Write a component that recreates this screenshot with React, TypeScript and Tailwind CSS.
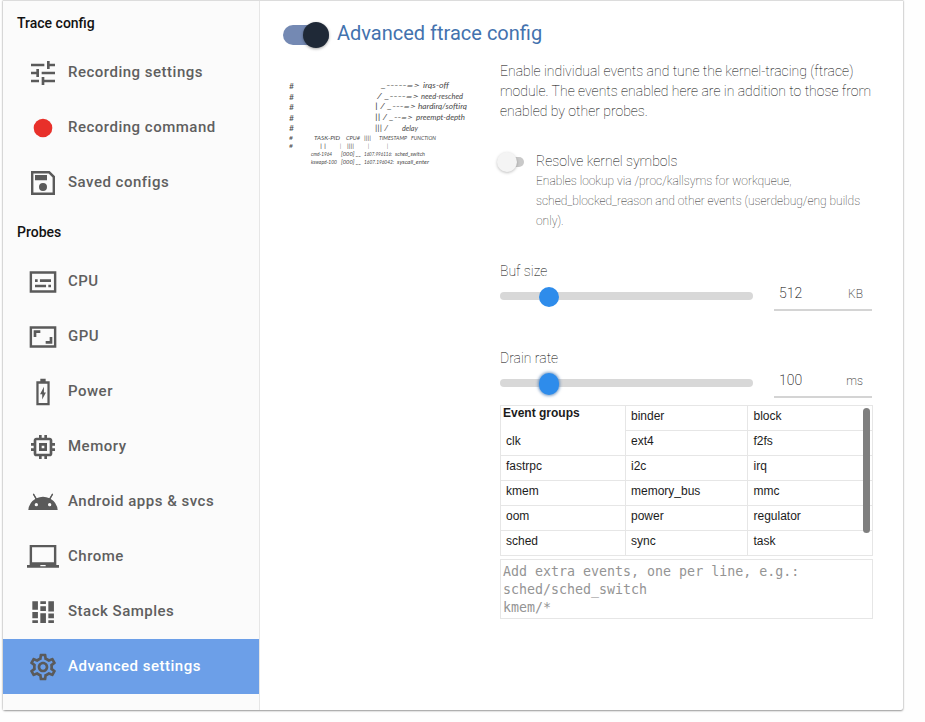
import React from "react";
import { MdTune, MdOutlineMemory, MdOutlineSettings } from "react-icons/md";

type Item = { label: string; icon: React.ReactNode; active?: boolean };

const Svg = ({ children }: { children: React.ReactNode }) => (
  <svg viewBox="0 0 24 24" className="size-8" fill="currentColor">
    {children}
  </svg>
);

const RecordIcon = () => (
  <Svg>
    <circle cx="12" cy="12" r="7" fill="#e8302a" />
  </Svg>
);

const SaveIcon = () => (
  <Svg>
    <path
      fillRule="evenodd"
      d="M3 3H17L21 7V21H3ZM4.8 4.8V19.2H19.2V7.8L16.2 4.8ZM6 6H15V10H6ZM12 12a3 3 0 1 0 0 6a3 3 0 1 0 0-6Z"
    />
  </Svg>
);

const SubtitlesIcon = () => (
  <Svg>
    <path
      fillRule="evenodd"
      d="M2 4H22V20H2ZM3.8 5.8V18.2H20.2V5.8ZM6 10H8V12H6ZM9.7 10H18V12H9.7ZM6 14H14.3V16H6ZM16 14H18V16H16Z"
    />
  </Svg>
);

const AspectIcon = () => (
  <Svg>
    <path
      fillRule="evenodd"
      d="M2 4H22V20H2ZM3.8 5.8V18.2H20.2V5.8ZM5 7H10V9H7V12H5ZM19 17H14V15H17V12H19Z"
    />
  </Svg>
);

const BatteryIcon = () => (
  <Svg>
    <path
      fillRule="evenodd"
      d="M10 2H14V4H17V22H7V4H10ZM8.7 5.8V20.2H15.3V5.8ZM12.7 8V12.3H14.2L11.4 17.7V13.7H9.8Z"
    />
  </Svg>
);

const AndroidIcon = () => (
  <Svg>
    <path
      fillRule="evenodd"
      d="M17.6 9.48l1.84-3.18a.38.38 0 0 0-.66-.38l-1.88 3.24a11.4 11.4 0 0 0-9.8 0L5.22 5.92a.38.38 0 0 0-.66.38L6.4 9.48A10.8 10.8 0 0 0 1 18h22a10.8 10.8 0 0 0-5.4-8.52ZM7 15.25a1.25 1.25 0 1 1 0-2.5a1.25 1.25 0 0 1 0 2.5Zm10 0a1.25 1.25 0 1 1 0-2.5a1.25 1.25 0 0 1 0 2.5Z"
    />
    <path d="M4.8 6 7 9.8M19.2 6 17 9.8" stroke="currentColor" strokeWidth="1" fill="none" />
  </Svg>
);

const LaptopIcon = () => (
  <Svg>
    <path
      fillRule="evenodd"
      d="M22 18V3H2V18H0V20H24V18ZM14 19H10V18H14ZM20.2 16H3.8V4.7H20.2Z"
    />
  </Svg>
);

const StackIcon = () => (
  <Svg>
    <path d="M4 4h4.2v6.3H4zM4 12h4.2v4.6H4zM4 18.2h4.2v2H4zM10 4h4.2v2H10zM10 7.6h4.2v3.6H10zM10 13h4.2v7.2H10zM16 4h4.2v7.6H16zM16 13.2h4.2v3.4H16zM16 18.2h4.2v2H16z" />
  </Svg>
);

const traceItems: Item[] = [
  { label: "Recording settings", icon: <MdTune size={32} /> },
  { label: "Recording command", icon: <RecordIcon /> },
  { label: "Saved configs", icon: <SaveIcon /> },
];

const probeItems: Item[] = [
  { label: "CPU", icon: <SubtitlesIcon /> },
  { label: "GPU", icon: <AspectIcon /> },
  { label: "Power", icon: <BatteryIcon /> },
  { label: "Memory", icon: <MdOutlineMemory size={32} /> },
  { label: "Android apps & svcs", icon: <AndroidIcon /> },
  { label: "Chrome", icon: <LaptopIcon /> },
  { label: "Stack Samples", icon: <StackIcon /> },
  { label: "Advanced settings", icon: <MdOutlineSettings size={32} />, active: true },
];

const NavGroup = ({ title, items }: { title: string; items: Item[] }) => (
  <>
    <h2 className="flex h-11 items-center pl-3.5 text-[14px] font-medium text-[#121212]">{title}</h2>
    <ul>
      {items.map((it) => (
        <li
          key={it.label}
          className={`flex h-[55px] items-center gap-[9px] pl-6 text-[#5a5a5a] ${it.active ? "bg-[#6c9fe8]" : ""}`}
        >
          <span>{it.icon}</span>
          <span
            className={`text-[15px] font-medium tracking-[0.5px] ${it.active ? "text-white" : "text-[#5f5f5f]"}`}
          >
            {it.label}
          </span>
        </li>
      ))}
    </ul>
  </>
);

type Note = [string, number, number, number, number];

// Each entry: text, x, baseline y, drawn length, font size.
const notes: Note[] = [
  ["#", 9, 14, 5, 7.5],
  ["#", 9, 24.5, 5, 7.5],
  ["#", 9, 35, 5, 7.5],
  ["#", 9, 45.5, 5, 7.5],
  ["#", 9, 56, 5, 7.5],
  ["#", 9, 65, 4, 5.5],
  ["#", 9, 73, 4, 5.5],
  ["_-----=>", 101, 13, 39, 8],
  ["irqs-off", 143, 13, 26, 7],
  ["/ _----=>", 97, 24, 42, 8],
  ["need-resched", 141, 24, 42, 7],
  ["| / _---=>", 95, 34, 41, 8],
  ["hardirq/softirq", 138, 34, 49, 7],
  ["|| / _--=>", 95, 45, 38, 8],
  ["preempt-depth", 136, 45, 49, 7],
  ["||| /", 95, 56, 13, 8],
  ["delay", 122, 56, 16, 7],
  ["TASK-PID", 34, 65, 26, 5.5],
  ["CPU#", 66, 65, 14, 5.5],
  ["||||", 84, 65, 7, 5.5],
  ["TIMESTAMP", 99, 65, 28, 5.5],
  ["FUNCTION", 131, 65, 25, 5.5],
  ["| |", 40, 73, 6, 5.5],
  ["|", 60, 73, 1, 5.5],
  ["||||", 67, 73, 7, 5.5],
  ["|", 88, 73, 1, 5.5],
  ["|", 107, 73, 1, 5.5],
  ["cmd-1964", 31, 80.5, 21, 5],
  ["[000] __", 61, 80.5, 20, 5],
  ["1607.996116:", 84, 80.5, 28, 5],
  ["sched_switch", 115, 80.5, 30, 5],
  ["kswapd-100", 31, 88.5, 26, 5],
  ["[000] __", 61, 88.5, 20, 5],
  ["1607.196042:", 84, 88.5, 30, 5],
  ["syscall_enter", 117, 88.5, 32, 5],
];

const Sketch = () => (
  <svg
    width="200"
    height="94"
    viewBox="0 0 200 94"
    className="block font-['Lato',sans-serif]"
    fill="#4a4a4a"
  >
    {notes.map(([t, x, y, w, s], i) => (
      <text
        key={i}
        x={x}
        y={y}
        fontSize={s}
        textLength={w}
        lengthAdjust="spacingAndGlyphs"
        fontStyle={t === "#" ? "normal" : "italic"}
      >
        {t}
      </text>
    ))}
  </svg>
);

const SliderRow = ({
  label,
  value,
  unit,
  focused,
}: {
  label: string;
  value: string;
  unit: string;
  focused?: boolean;
}) => (
  <div className="text-[14px] font-thin text-black">
    <div className="h-5 leading-5">{label}</div>
    <div className="flex h-[30px] justify-between">
      <div className="relative mt-[11px] h-2 w-[253px] rounded-full bg-[#d8d8d8]">
        <span
          className={`absolute left-[39px] rounded-full bg-[#2e8ceb] ${
            focused
              ? "-top-[6px] h-[22px] w-5 shadow-[0_0_3px_1px_rgba(60,110,170,0.65)]"
              : "-top-[5px] size-5"
          }`}
        />
      </div>
      <div className="flex w-[98px] items-center justify-between border-b-2 border-[#d4d4d4] pr-[9px] pb-[3px] pl-[5px]">
        <span className="font-extralight text-black">{value}</span>
        <span className="text-[12px] font-extralight text-[#333]">{unit}</span>
      </div>
    </div>
  </div>
);

const groups: string[][] = [
  ["", "binder", "block"],
  ["clk", "ext4", "f2fs"],
  ["fastrpc", "i2c", "irq"],
  ["kmem", "memory_bus", "mmc"],
  ["oom", "power", "regulator"],
  ["sched", "sync", "task"],
];

const EventGroups = () => (
  <div className="relative h-[151px] w-[373px] border border-[#e6e6e6] font-['Liberation_Sans',Arial,sans-serif] text-[12px] text-[#1c1c1c]">
    {groups.map((row, r) => (
      <div key={r} className="grid h-[25px] grid-cols-[125px_122px_124px]">
        {row.map((name, c) => (
          <div
            key={c}
            className={`leading-[21px] ${c < 2 ? "border-r border-[#e6e6e6] pl-[5px]" : "pl-[5.5px]"} ${
              r < 5 && !(r === 0 && c === 0) ? "border-b border-b-[#e6e6e6]" : ""
            }`}
          >
            {r === 0 && c === 0 ? <b className="-ml-[3px] block leading-[15px]">Event groups</b> : name}
          </div>
        ))}
      </div>
    ))}
    <span className="absolute top-[2px] right-[2px] h-[125px] w-[7px] rounded-full bg-[#7f7f7f]" />
  </div>
);

export default function App() {
  return (
    <div className="h-[722px] w-[925px] overflow-hidden bg-[#fefefe] pl-[3px] font-['Roboto',sans-serif]">
      <div className="flex h-[710px] w-[900px] rounded-b-[2px] border-t border-[#dcdcdc] bg-white shadow-[0_1px_2px_0_rgba(0,0,0,0.35),0_0_2px_0_rgba(0,0,0,0.25)]">
        <nav className="w-[257px] shrink-0 border-r border-[#e6e6e6] bg-[#fbfbfb]">
          <NavGroup title="Trace config" items={traceItems} />
          <NavGroup title="Probes" items={probeItems} />
        </nav>
        <main className="pl-5">
          <header className="flex h-[60px] items-center gap-2 pl-[3px]">
            <span className="mt-2 flex h-5 w-[46px] items-center justify-end rounded-full bg-[#7489b3]">
              <span className="size-[26px] rounded-full bg-[#1f2937] shadow-[0_1px_3px_rgba(0,0,0,0.35)]" />
            </span>
            <h1 className="mt-1 text-[20px] text-[#4372ae]">Advanced ftrace config</h1>
          </header>
          <div className="flex gap-5">
            <div className="w-[200px] pt-[14px]">
              <Sketch />
            </div>
            <section className="w-[373px]">
              <p className="text-[14px] leading-5 font-thin whitespace-nowrap text-black">
                Enable individual events and tune the kernel-tracing (ftrace)
                <br />
                module. The events enabled here are in addition to those from
                <br />
                enabled by other probes.
              </p>
              <div className="mt-[30px] flex gap-3">
                <span className="relative mt-[6px] ml-[-1px] h-[10px] w-[25px] rounded-full bg-[#c9c9c9]">
                  <span className="absolute -top-[5px] -left-[2px] size-5 rounded-full bg-[#f4f4f4] shadow-[0_1px_3px_rgba(0,0,0,0.25)]" />
                </span>
                <div className="leading-5 font-thin whitespace-nowrap">
                  <div className="text-[14px] text-black">Resolve kernel symbols</div>
                  <div className="text-[12px] text-[#111]">
                    Enables lookup via /proc/kallsyms for workqueue,
                    <br />
                    sched_blocked_reason and other events (userdebug/eng builds
                    <br />
                    only).
                  </div>
                </div>
              </div>
              <div className="mt-[30px] flex w-[372px] flex-col gap-[37px]">
                <SliderRow label="Buf size" value="512" unit="KB" />
                <SliderRow label="Drain rate" value="100" unit="ms" focused />
              </div>
              <div className="mt-[7px]">
                <EventGroups />
              </div>
              <div className="mt-[3px] h-[60px] border border-[#e6e6e6] px-[2px] pt-[3px] font-['DejaVu_Sans_Mono',monospace] text-[13.3px] leading-[18px] text-[#949494]">
                Add extra events, one per line, e.g.:
                <br />
                sched/sched_switch
                <br />
                kmem/*
              </div>
            </section>
          </div>
        </main>
      </div>
    </div>
  );
}
